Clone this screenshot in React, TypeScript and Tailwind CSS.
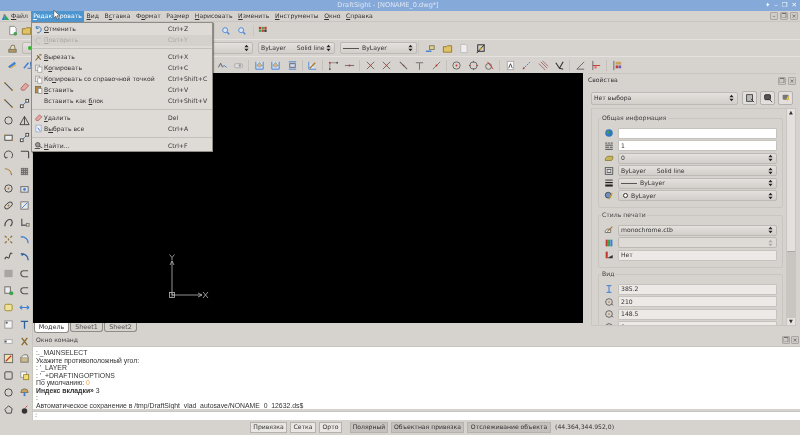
import type { ReactNode } from "react";

const S = "#444";
const RED = "#c0392b";
const BLUE = "#3f7fd0";

// small hand drawn toolbar glyphs, all on a 12x12 box
const glyphs: Record<string, ReactNode> = {
  line: (<><path d="M2 2L10 10" stroke="#555" strokeWidth="1.2" /><circle cx="2" cy="2" r="1" fill="#b5893a" /><circle cx="10" cy="10" r="1" fill="#b5893a" /></>),
  circle: <circle cx="6" cy="6" r="4" fill="none" stroke={S} />,
  rect: (<><rect x="2" y="3.5" width="8" height="5.5" fill="#eee" stroke={S} /><circle cx="2" cy="3.5" r="0.9" fill="#b5893a" /><circle cx="10" cy="9" r="0.9" fill="#b5893a" /></>),
  arc: <path d="M3 10A4.5 4.5 0 1 1 9 10M3 10l2-1M3 10l-1-2" fill="none" stroke={S} />,
  curve: <path d="M2 3C6 3 9 6 9.5 10" fill="none" stroke="#a8762c" strokeWidth="1.3" />,
  target: (<><circle cx="6" cy="6" r="4" fill="none" stroke={S} /><circle cx="6" cy="6" r="1" fill="#a8762c" /></>),
  ellipse: (<><ellipse cx="6" cy="6" rx="5" ry="2.6" transform="rotate(-40 6 6)" fill="none" stroke={S} /><circle cx="6" cy="6" r="1" fill="#a8762c" /></>),
  hook: <path d="M2 10C2 4 6 2 9 3C10.5 5 10 8 8 10" fill="none" stroke={S} strokeWidth="1.2" />,
  dots: <path d="M2 2l2 2M10 2L8 4M2 10l2-2M10 10L8 8M6 5v2" stroke="#8a6b30" strokeWidth="1.4" />,
  wave: <path d="M2 9C4 3 6 11 7 6S9 2 10 3" fill="none" stroke={S} strokeWidth="1.2" />,
  solid: <rect x="1.5" y="2" width="9" height="8" fill="#a8a6a3" />,
  addgreen: (<><rect x="2" y="2" width="6" height="7" fill="#eee" stroke="#666" /><circle cx="9" cy="9" r="2.3" fill="#3fa34d" /></>),
  yellowbox: <rect x="2" y="2.5" width="8" height="7" rx="1.5" fill="#efe29a" stroke="#a08a2a" />,
  note: (<><rect x="2" y="2" width="8" height="8" fill="#f4f4f4" stroke="#999" /><rect x="3" y="3" width="2" height="2" fill="#555" /></>),
  tag: (<><rect x="2" y="4" width="8" height="4" fill="#fff" stroke="#aaa" /><rect x="2" y="5" width="2" height="2" fill="#555" /></>),
  pencil: (<><rect x="1.5" y="1.5" width="9" height="9" fill="#efe3b0" stroke="#666" /><path d="M3 9L9 3" stroke={RED} strokeWidth="1.4" /></>),
  square: <rect x="2" y="2" width="8" height="8" rx="1" fill="none" stroke={S} />,
  star: <path d="M6 2L10 5L9 10H4L2 6Z" fill="none" stroke={S} />,
  eraser: <path d="M2 8L7 2.5L10.5 5L6 10H3Z" fill="#e6a6a0" stroke="#a66" />,
  nodes: (<><path d="M3 9L9 3" stroke={BLUE} /><rect x="1.5" y="7.5" width="3" height="3" fill="#fff" stroke={S} /><rect x="7.5" y="1.5" width="3" height="3" fill="#fff" stroke={S} /></>),
  warn: <path d="M6 1.5L11 10.5H1ZM6 1.5V10.5" fill="none" stroke={S} />,
  corner: <path d="M2 2.5H9.5Q10.5 2.5 10.5 4V10" fill="none" stroke={S} strokeWidth="1.2" />,
  grid: <path d="M2 3H10M2 5H10M2 7H10M2 9H10M3 2V10M5 2V10M7 2V10M9 2V10" stroke="#666" />,
  camera: (<><rect x="2" y="4" width="8" height="6" fill="#dfe4ea" stroke="#666" /><circle cx="6" cy="7" r="1.5" fill={BLUE} /></>),
  diag: (<><rect x="2" y="2" width="8" height="8" fill="#e8e8e8" stroke="#777" /><path d="M3 9L9 3" stroke={BLUE} /></>),
  lshape: (<><path d="M3 2V9H10" fill="none" stroke="#666" strokeWidth="1.5" /><rect x="8" y="7" width="3" height="3" fill="#e3d9a0" stroke="#777" /></>),
  quarter: <path d="M2 3C7 3 10 6 10 10" fill="none" stroke={BLUE} strokeWidth="1.4" />,
  quarter2: <path d="M2 3C7 3 10 6 10 10M3 5L5 3" fill="none" stroke="#2b5f9e" strokeWidth="1.4" />,
  cup: <path d="M10 3H5Q2 3 2 6T5 9.5H10" fill="none" stroke="#555" strokeWidth="1.2" />,
  arrows: <path d="M1 6H11M1 6L3.5 4M1 6L3.5 8M11 6L8.5 4M11 6L8.5 8" fill="none" stroke={BLUE} strokeWidth="1.1" />,
  tee: <path d="M2 2.5H10M6 2.5V10.5" stroke="#2b5f9e" strokeWidth="1.4" />,
  scissors: <path d="M3 2L9 10M9 2L3 10" stroke="#8a6b30" strokeWidth="1.5" />,
  layers: (<><rect x="2" y="5" width="8" height="5" fill="#cdb98a" stroke="#776" /><path d="M2 5L5 2H9L10 5" fill="#eee" stroke="#776" /></>),
  overlap: (<><rect x="2" y="2" width="6" height="6" fill="#fff" stroke="#999" /><rect x="5" y="5" width="5.5" height="5.5" fill="#f2dd75" stroke="#a08a2a" /></>),
  mush: (<><path d="M2 6A4 4 0 0 1 10 6Z" fill="#c8a25c" stroke="#776" /><rect x="5" y="6" width="2" height="4" fill={BLUE} /></>),
  bomb: (<><circle cx="6" cy="7.5" r="3" fill="#333" /><path d="M7 4L9 2" stroke={RED} /></>),
  page: (<><path d="M3 1.5H8L10 3.5V10.5H3Z" fill="#eee" stroke="#bbb" /></>),
  pageNew: (<><path d="M3 1.5H8L10 3.5V10.5H3Z" fill="#fff" stroke="#888" /><circle cx="9" cy="9.5" r="2" fill="#3fa34d" /></>),
  folder: <path d="M1.5 4H5L6 3H10.5V10H1.5Z" fill="#e0c368" stroke="#94782a" />,
  zoom: (<><circle cx="5" cy="5" r="3" fill="#d7e6f7" stroke={BLUE} /><path d="M7.5 7.5L10 10" stroke={BLUE} strokeWidth="1.5" /></>),
  colors: (<><rect x="2" y="2" width="2.5" height="2.5" fill={RED} /><rect x="5" y="2" width="2.5" height="2.5" fill="#3fa34d" /><rect x="8" y="2" width="2.5" height="2.5" fill={RED} /><rect x="2" y="5" width="2.5" height="2.5" fill="#3fa34d" /><rect x="5" y="5" width="2.5" height="2.5" fill={RED} /><rect x="8" y="5" width="2.5" height="2.5" fill="#333" /></>),
  layerIcon: (<><rect x="2" y="7" width="8" height="3" fill="#b79a5c" stroke="#776" /><path d="M3 7L5 2.5H8L9 7Z" fill="#eadcae" stroke="#776" /></>),
  tool3a: (<><path d="M2 8L9 3" stroke={BLUE} strokeWidth="2.5" /><path d="M4 9L10 5" stroke="#d6b43c" strokeWidth="1.2" /></>),
  tool3b: (<><path d="M2 9L7 3" stroke={BLUE} strokeWidth="1.6" /><path d="M6 9H10L9 2" fill="none" stroke="#3f6fb0" /></>),
  dimA: (<><path d="M1.5 8L4 3.5L6 8" fill="none" stroke="#555" /><path d="M6 7Q8 5 10.5 8" fill="none" stroke={BLUE} /></>),
  toggle: (<><rect x="1.5" y="4" width="9" height="4.5" rx="2" fill="#ddd" stroke="#aaa" /><circle cx="7.5" cy="6" r="1.3" fill="#999" /></>),
  frameBlue: (<><path d="M2 2V10H10V2" fill="#d3e0f2" stroke={BLUE} /><path d="M3 6L6 2.5L9 6L6 8Z" fill="#cdb98a" stroke="#776" strokeWidth="0.5" /></>),
  dimH: (<><path d="M2 2H10M2 10H10" stroke={BLUE} /><rect x="3" y="4" width="6" height="4" fill="#c9d9ef" stroke="#667" /></>),
  pen: (<><path d="M2 2V10H10" fill="#dfe8f5" stroke={BLUE} /><path d="M3 9L9 3" stroke="#a8762c" strokeWidth="1.3" /></>),
  ptLine: (<><path d="M2 3H10M2 3V10" stroke="#888" /><circle cx="2" cy="3" r="1" fill={RED} /><circle cx="10" cy="3" r="1" fill="#555" /><circle cx="2" cy="10" r="1" fill="#555" /></>),
  horiz: (<><path d="M1 6H11" stroke="#777" strokeWidth="1.2" /><circle cx="6" cy="6" r="1" fill={RED} /></>),
  cross: (<><path d="M2 2L10 10M10 2L2 10" stroke="#666" /><circle cx="6" cy="6" r="0.8" fill={RED} /></>),
  slash: (<><path d="M2 2L10 10" stroke="#666" strokeWidth="1.1" /><circle cx="6" cy="6" r="0.9" fill={RED} /></>),
  teeGray: <path d="M2 3H10M6 3V10.5" stroke="#777" strokeWidth="1.1" />,
  slashRed: (<><path d="M2 10L10 2" stroke="#777" /><circle cx="6" cy="6" r="1" fill={RED} /></>),
  ring: (<><circle cx="6" cy="6" r="4" fill="none" stroke="#666" /><circle cx="6" cy="6" r="1" fill={RED} /></>),
  ringRed: (<><circle cx="6" cy="6" r="4" fill="none" stroke="#666" /><path d="M6 1V3M6 9V11M1 6H3M9 6H11" stroke={RED} /></>),
  tan: (<><circle cx="5" cy="7" r="3.2" fill="none" stroke="#666" /><path d="M4 2L10 10" stroke={RED} /></>),
  docA: (<><rect x="2.5" y="1.5" width="7" height="9" fill="#fff" stroke="#aaa" /><path d="M4 9L6 4L8 9" fill="none" stroke="#444" /></>),
  dashRB: (<><path d="M2 10L10 2" stroke={BLUE} strokeDasharray="2 1" /><circle cx="3" cy="9" r="1" fill={RED} /></>),
  hatch: <path d="M1 4L8 11M3 2L10 9M5 1L11 7" stroke="#a06a6a" />,
  check: <path d="M2 3L6 9L10 2M6 9L10 10" fill="none" stroke="#333" strokeWidth="1.2" />,
  angle: <path d="M2 10L10 2M2 10H10" fill="none" stroke="#666" />,
  vdim: (<><path d="M2 1V11" stroke="#666" /><path d="M2 6H10" stroke={RED} /><circle cx="5" cy="8" r="1.5" fill="#e77" /></>),
  vlayers: (<><path d="M2 1V11" stroke="#666" /><rect x="4" y="2" width="6" height="3" fill="#c9a25c" /><rect x="4" y="6" width="2.5" height="3" fill={RED} /><rect x="7" y="6" width="3" height="3" fill="#75a" /></>),
  mark: (<><rect x="3" y="2" width="7" height="7" fill="none" stroke="#222" /><path d="M2 11L10 2" stroke="#222" /><circle cx="6" cy="6" r="1" fill="#c9a21c" /></>),
  lockLayer: (<><rect x="5" y="3" width="5" height="4" fill="#e3d487" stroke="#776" /><path d="M1 9H7" stroke={BLUE} strokeWidth="1.5" /></>),
  cursorDoc: (<><rect x="2" y="2" width="7" height="8" fill="#bbb" stroke="#333" /><path d="M7 7L11 11" stroke="#333" /></>),
  cursorOn: (<><rect x="2" y="2" width="7" height="6" rx="1" fill="#555" stroke="#222" /><path d="M7 7L11 11" stroke="#333" /></>),
  bolt: (<><rect x="2" y="2" width="7" height="6" rx="1" fill="#777" /><path d="M8 4L6 8H8L7 11L10 6.5H8.5L9.5 4Z" fill="#eec11c" /></>),
  globe: (<><circle cx="6" cy="6" r="4.5" fill="#2f79c2" /><path d="M3 4L6 3V6L4 8Z" fill="#4c9a4c" /></>),
  hLines: <path d="M1.5 2.5H4M5 2.5H7M8 2.5H10.5M1.5 5H10.5M1.5 7.5H6M7 7.5H10.5M1.5 10H10.5" stroke="#333" />,
  slab: <path d="M1.5 7L4 4H10.5V7L9 9H1.5Z" fill="#c8b45a" stroke="#8c7c36" />,
  ltype: (<><rect x="1.5" y="2" width="9" height="8" fill="#eee" stroke="#444" /><path d="M3 4H9M3 6H5M7 6H9M3 8H9" stroke="#333" /></>),
  lweight: (<><path d="M1.5 2.5H10.5" stroke="#222" /><path d="M1.5 5.5H10.5" stroke="#222" strokeWidth="1.5" /><path d="M1.5 9H10.5" stroke="#222" strokeWidth="2.5" /></>),
  color: (<><circle cx="5" cy="5" r="3.5" fill="#6c8fc9" stroke="#444" /><path d="M6 10L10 2" stroke="#c9a21c" strokeWidth="1.4" /></>),
  plot: (<><path d="M1.5 9H8V5H4L1.5 7Z" fill="#eee" stroke="#666" /><path d="M4 8L10 2" stroke="#a8762c" strokeWidth="1.3" /></>),
  bars: (<><rect x="2" y="2" width="2.5" height="8" fill={RED} /><rect x="4.8" y="2" width="2.5" height="8" fill="#3fa34d" /><rect x="7.6" y="2" width="2.5" height="8" fill={BLUE} /></>),
  plotBars: (<><rect x="2" y="2" width="2.5" height="8" fill={RED} /><path d="M5 10H10.5V6L5 9" fill="#333" /></>),
  ibeam: <path d="M3 2H9M3 10H9M6 2V10" stroke={BLUE} strokeWidth="1.2" />,
  view: (<><circle cx="6" cy="6" r="4" fill="none" stroke="#555" /><circle cx="6" cy="6" r="1" fill="#a8762c" /><path d="M9 8L11 10" stroke="#555" /></>),
  undo: <path d="M3 3C8 1 11 5 9 8S5 10.5 4 10M3 1.5V4.5H6" fill="none" stroke="#2f79c2" strokeWidth="1.3" />,
  redo: <path d="M9 3C4 1 1 5 3 8S7 10.5 8 10" fill="none" stroke="#bbb" strokeWidth="1.3" />,
  cut: <path d="M2 10L7 4M4 3L9 9M7 2.5H10" stroke="#7a6430" strokeWidth="1.4" />,
  copy: (<><rect x="2" y="1.5" width="5.5" height="7" fill="#eee" stroke="#999" /><rect x="5" y="4" width="5.5" height="7" fill="#fff" stroke="#999" /></>),
  paste: (<><rect x="2" y="2" width="7" height="8.5" fill="#b98a3c" stroke="#665" /><rect x="5.5" y="4.5" width="5" height="6.5" fill="#fff" stroke="#888" /></>),
  selall: (<><rect x="2.5" y="1.5" width="7" height="9" fill="#eef" stroke="#9ab" /><path d="M5 5L8 9" stroke={BLUE} strokeWidth="1.3" /></>),
  find: (<><circle cx="5" cy="5" r="3" fill="#999" stroke="#444" /><path d="M7 7L11 9M1 10H8" stroke="#444" strokeWidth="1.2" /></>),
  logo: (<><path d="M1 10.5L5 2V10.5Z" fill="#2a7fd0" /><path d="M5 3L11 10.5H5Z" fill="#2fa84f" /><path d="M3 4H6" stroke="#d43" /></>),
};

function Ico({ k, size = 12, className = "" }: { k: string; size?: number; className?: string }) {
  return (
    <svg viewBox="0 0 12 12" width={size} height={size} className={"shrink-0 " + className}>
      {glyphs[k]}
    </svg>
  );
}

// Qt style label, & marks the underlined letter
function Label({ text }: { text: string }) {
  const i = text.indexOf("&");
  if (i < 0) return <>{text}</>;
  return (
    <>
      {text.slice(0, i)}
      <u>{text[i + 1]}</u>
      {text.slice(i + 2)}
    </>
  );
}

function Updown({ dim }: { dim?: boolean }) {
  return (
    <svg viewBox="0 0 6 9" width="5" height="8" className="shrink-0">
      <path d="M3 0.5L5.5 3.5H0.5ZM3 8.5L5.5 5.5H0.5Z" fill={dim ? "#aaa" : "#222"} />
    </svg>
  );
}

function Combo({ children, className = "", dim }: { children?: ReactNode; className?: string; dim?: boolean }) {
  return (
    <div
      className={
        "flex items-center justify-between rounded-[2px] border border-[#bdb9b4] px-[2px] pr-[3px] " +
        (dim ? "bg-[#dedad6] " : "bg-gradient-to-b from-[#e4e1de] to-[#d2cec9] ") +
        className
      }
    >
      <div className="flex items-center gap-[3px] whitespace-nowrap">{children}</div>
      <Updown dim={dim} />
    </div>
  );
}

function Field({ children, white }: { children?: ReactNode; white?: boolean }) {
  return (
    <div
      className={
        "flex h-[11px] flex-1 items-center rounded-[1px] border border-[#c6c2bd] px-[2px] " +
        (white ? "bg-white" : "bg-[#ece9e6]")
      }
    >
      {children}
    </div>
  );
}

function PropRow({ icon, children }: { icon: string; children: ReactNode }) {
  return (
    <div className="flex h-[12.5px] items-center">
      <div className="flex w-[19px] justify-center">
        <Ico k={icon} size={10} />
      </div>
      <div className="flex flex-1 items-center">{children}</div>
    </div>
  );
}

function Group({ title, className, children }: { title: string; className: string; children: ReactNode }) {
  return (
    <div className={"relative shrink-0 rounded-[2px] border border-[#c9c5c0] pr-[5px] " + className}>
      <span className="absolute left-[2px] top-[-4px] bg-[#d6d2ce] px-[1px] text-[#444]">{title}</span>
      {children}
    </div>
  );
}

function ToolRow({ groups }: { groups: string[][] }) {
  return (
    <div className="flex items-center">
      {groups.map((g, i) => (
        <div key={i} className={"flex items-center gap-[5.5px] " + (i > 0 ? "ml-[4px] border-l border-[#c4c0bb] pl-[4.5px]" : "")}>
          {g.map((k, j) => (
            <Ico key={j} k={k} size={11} />
          ))}
        </div>
      ))}
    </div>
  );
}

const menuBar = ["&Редактировать", "&Вид", "В&ставка", "Ф&ормат", "Ра&змер", "&Нарисовать", "&Изменить", "&Инструменты", "&Окно", "&Справка"];

const popup: ({ icon?: string; text: string; key: string; off?: boolean } | null)[] = [
  { icon: "undo", text: "&Отменить", key: "Ctrl+Z" },
  { icon: "redo", text: "&Повторить", key: "Ctrl+Y", off: true },
  null,
  { icon: "cut", text: "&Вырезать", key: "Ctrl+X" },
  { icon: "copy", text: "К&опировать", key: "Ctrl+C" },
  { icon: "copy", text: "Ко&пировать со справочной точкой", key: "Ctrl+Shift+C" },
  { icon: "paste", text: "&Вставить", key: "Ctrl+V" },
  { text: "Вставить как &блок", key: "Ctrl+Shift+V" },
  null,
  { icon: "eraser", text: "&Удалить", key: "Del" },
  { icon: "selall", text: "В&ыбрать все", key: "Ctrl+A" },
  null,
  { icon: "find", text: "&Найти...", key: "Ctrl+F" },
];

const leftTools = [
  "line", "eraser", "line", "nodes", "circle", "warn", "rect", "nodes", "arc", "corner", "curve", "grid",
  "target", "camera", "ellipse", "diag", "hook", "lshape", "dots", "quarter", "wave", "quarter2", "solid", "cup",
  "addgreen", "cup", "yellowbox", "arrows", "note", "tee", "tag", "scissors", "pencil", "layers", "square", "overlap",
  "circle", "mush", "star", "bomb",
];

const status = [
  { t: "Привязка", w: "w-[37px]" },
  { t: "Сетка", w: "w-[26px]" },
  { t: "Орто", w: "w-[23px]" },
  { t: "Полярный", w: "w-[38px]", on: true, ml: "ml-[5px]" },
  { t: "Объектная привязка", w: "w-[73px]", on: true },
  { t: "Отслеживание объекта", w: "w-[84px]", on: true },
];

function WinBtn({ children }: { children: ReactNode }) {
  return (
    <div className="flex h-[8px] w-[8px] items-center justify-center rounded-[1px] border border-[#aaa6a1] bg-[#cfcbc6] text-[6px] leading-none text-[#555]">
      {children}
    </div>
  );
}

export default function App() {
  return (
    <div className="relative h-[435px] w-[800px] overflow-hidden bg-[#d6d2ce] font-['DejaVu_Sans',sans-serif] text-[6.1px] leading-none text-[#333] blur-[0.25px]">
      {/* title bar */}
      <div className="relative flex h-[11px] items-center justify-center bg-[#85a9d8] text-[#dfe7f3]">
        <span className="ml-[-24px] text-[6.6px]">DraftSight - [NONAME_0.dwg*]</span>
        <div className="absolute right-[3px] top-[2px] flex gap-[4px] text-[6.5px] text-white">
          <span>✦</span>
          <span>–</span>
          <span>❐</span>
          <span>✕</span>
        </div>
      </div>

      {/* menu */}
      <div className="relative flex h-[11px] items-center border-b border-[#c9c5c0] pl-[1px]">
        <Ico k="logo" size={9} />
        <span className="ml-[1px] w-[20px]">
          <Label text="&Файл" />
        </span>
        {menuBar.map((m, i) => (
          <span
            key={m}
            className={
              i === 0
                ? "mr-[-3px] flex h-[11px] w-[53px] items-center justify-center whitespace-nowrap bg-[#4d95cf] text-white"
                : "ml-[5.6px] whitespace-nowrap"
            }
          >
            <Label text={m} />
          </span>
        ))}
        <div className="absolute right-[2px] top-[1px] flex gap-[2px]">
          <WinBtn>–</WinBtn>
          <WinBtn>❐</WinBtn>
          <WinBtn>×</WinBtn>
        </div>
      </div>

      {/* toolbar 1 */}
      <div className="flex h-[18px] items-center border-b border-[#e4e1de] pl-[7px]">
        <Ico k="pageNew" size={11} />
        <Ico k="folder" size={11} className="ml-[3px]" />
        <Ico k="zoom" size={10} className="ml-[189px]" />
        <Ico k="zoom" size={10} className="ml-[6px]" />
        <div className="ml-[6px] h-[11px] border-l border-[#c9c5c0]" />
        <Ico k="colors" size={11} className="ml-[3px]" />
      </div>

      {/* toolbar 2 */}
      <div className="flex h-[17px] items-center border-b border-[#e4e1de] pl-[7px]">
        <Ico k="layerIcon" size={11} />
        <Combo className="ml-[4px] h-[12px] w-[231px]">
          <span className="ml-[3px] h-[4px] w-[4px] rounded-full bg-[#2fb52f]" />
        </Combo>
        <Combo className="ml-[5px] h-[12px] w-[77px]">
          <span>ByLayer</span>
          <span className="ml-[8px]">Solid line</span>
        </Combo>
        <Combo className="ml-[5px] h-[12px] w-[77px]">
          <span className="w-[16px] border-t border-[#555]" />
          <span>ByLayer</span>
        </Combo>
        <div className="ml-[1px] flex h-[14px] items-center gap-[5.5px] border-l border-[#c9c5c0] pl-[6px]">
          <Ico k="lockLayer" size={11} />
          <Ico k="folder" size={11} />
          <Ico k="page" size={11} />
          <Ico k="mark" size={11} />
        </div>
      </div>

      {/* toolbar 3 */}
      <div className="flex h-[16px] items-center pl-[7px]">
        <Ico k="tool3a" size={11} />
        <Ico k="tool3b" size={11} className="ml-[4px]" />
        <div className="ml-[183.5px]">
          <ToolRow
            groups={[
              ["dimA", "toggle"],
              ["frameBlue", "frameBlue", "dimH"],
              ["pen"],
              ["ptLine", "horiz"],
              ["cross", "cross", "slash", "teeGray", "slashRed"],
              ["ring", "ringRed", "tan"],
              ["docA", "dashRB", "hatch", "check"],
              ["angle", "vdim"],
              ["vlayers"],
            ]}
          />
        </div>
      </div>

      {/* main area */}
      <div className="flex h-[347px]">
        <div className="grid h-full w-[33px] grid-cols-2 content-start justify-items-center border-r border-[#c9c5c0] pt-[5px]">
          {leftTools.map((k, i) => (
            <div key={i} className="flex h-[17px] items-center">
              <Ico k={k} size={11} />
            </div>
          ))}
        </div>

        <div className="flex min-w-0 flex-1 flex-col">
          <div className="flex h-[260px]">
            {/* drawing area */}
            <div className="flex w-[550px] flex-col">
              <div className="relative h-[250px] bg-black">
                <svg viewBox="0 0 50 50" width="50" height="50" className="absolute left-[130px] top-[181px]">
                  <path d="M9 41V7M9 7L7 11M9 7L11 11M9 41H39M39 41L35 39M39 41L35 43" fill="none" stroke="#b8b8b8" strokeWidth="0.8" />
                  <rect x="6.5" y="38.5" width="5" height="5" fill="none" stroke="#b8b8b8" strokeWidth="0.8" />
                  <path d="M9 41H11.5M9 38.5V43.5" stroke="#b8b8b8" strokeWidth="0.6" />
                  <path d="M6.5 0.5L9 3.5L11.5 0.5M9 3.5V6.5M40 38L45 44M45 38L40 44" fill="none" stroke="#b8b8b8" strokeWidth="0.8" />
                </svg>
              </div>
              <div className="flex h-[10px] items-start pl-[1px] text-[6.4px]">
                <div className="flex h-[10px] w-[35px] items-center justify-center rounded-b-[3px] border border-t-0 border-[#8f8b86] bg-white text-[#333]">
                  Модель
                </div>
                <div className="ml-[1px] flex h-[9px] w-[33px] items-center justify-center rounded-b-[3px] border border-t-0 border-[#8f8b86] text-[#555]">
                  Sheet1
                </div>
                <div className="ml-[1px] flex h-[9px] w-[33px] items-center justify-center rounded-b-[3px] border border-t-0 border-[#8f8b86] text-[#555]">
                  Sheet2
                </div>
              </div>
            </div>

            {/* properties */}
            <div className="ml-[2px] flex min-w-0 flex-1 flex-col pl-[3px] pr-[4px]">
              <div className="flex h-[14px] items-center justify-between border-t border-[#c9c5c0]">
                <span>Свойства</span>
                <div className="flex gap-[2px]">
                  <WinBtn>❐</WinBtn>
                  <WinBtn>×</WinBtn>
                </div>
              </div>
              <div className="mt-[4px] flex h-[14px] items-center pl-[3px]">
                <Combo className="h-[13px] w-[147px]">
                  <span>Нет выбора</span>
                </Combo>
                {["cursorDoc", "cursorOn", "bolt"].map((k, i) => (
                  <div key={k} className={"flex h-[14px] w-[15px] items-center justify-center rounded-[2px] border border-[#b5b1ac] bg-[#e2dfdc] " + (i === 0 ? "ml-[4px]" : "ml-[3px]")}>
                    <Ico k={k} size={10} />
                  </div>
                ))}
              </div>
              <div className="relative ml-[3px] mt-[3px] flex h-[218px] overflow-hidden border border-[#c9c5c0] pl-[6px]">
                <div className="flex min-w-0 flex-1 flex-col pr-[3px] pt-[9px]">
                  <Group title="Общая информация" className="h-[90px] pt-[8px]">
                    <PropRow icon="globe"><Field white /></PropRow>
                    <PropRow icon="hLines"><Field white>1</Field></PropRow>
                    <PropRow icon="slab"><Combo className="h-[11px] flex-1">0</Combo></PropRow>
                    <PropRow icon="ltype">
                      <Combo className="h-[11px] flex-1"><span>ByLayer</span><span className="ml-[8px]">Solid line</span></Combo>
                    </PropRow>
                    <PropRow icon="lweight">
                      <Combo className="h-[11px] flex-1"><span className="w-[16px] border-t border-[#555]" /><span>ByLayer</span></Combo>
                    </PropRow>
                    <PropRow icon="color">
                      <Combo className="h-[11px] flex-1"><span className="ml-[2px] h-[5px] w-[5px] rounded-full border border-[#333] bg-white" /><span>ByLayer</span></Combo>
                    </PropRow>
                  </Group>
                  <Group title="Стиль печати" className="mt-[7px] h-[53px] pt-[8px]">
                    <PropRow icon="plot"><Combo className="h-[11px] flex-1">monochrome.ctb</Combo></PropRow>
                    <PropRow icon="bars"><Combo className="h-[11px] flex-1" dim /></PropRow>
                    <PropRow icon="plotBars"><Field>Нет</Field></PropRow>
                  </Group>
                  <Group title="Вид" className="mt-[6px] h-[70px] pt-[8px]">
                    <PropRow icon="ibeam"><Field>385.2</Field></PropRow>
                    <PropRow icon="view"><Field>210</Field></PropRow>
                    <PropRow icon="view"><Field>148.5</Field></PropRow>
                    <PropRow icon="view"><Field>0</Field></PropRow>
                  </Group>
                </div>
                {/* scrollbar */}
                <div className="flex w-[9px] shrink-0 flex-col border-l border-[#c9c5c0] bg-[#c9c5c0]">
                  <div className="flex h-[7px] items-center justify-center bg-[#e6e3e0] text-[5px]">▲</div>
                  <div className="h-[136px] border-b border-[#aaa] bg-[#e3e0dd]" />
                  <div className="flex-1" />
                  <div className="flex h-[7px] items-center justify-center bg-[#e6e3e0] text-[5px]">▼</div>
                </div>
              </div>
            </div>
          </div>

          {/* command window */}
          <div className="flex h-[14px] items-center justify-between border-b border-[#c9c5c0] pl-[3px] pr-[1px] pt-[1px]">
            <span className="text-[#444]">Окно команд</span>
            <div className="flex gap-[1px]">
              <WinBtn>❐</WinBtn>
              <WinBtn>×</WinBtn>
            </div>
          </div>
          <div className="flex h-[63px] flex-col justify-end overflow-hidden bg-white pl-[3px] font-['Liberation_Sans',sans-serif] text-[6.85px] leading-[7.5px] text-[#333]">
            <div>:._MAINSELECT</div>
            <div>Укажите противоположный угол:</div>
            <div>: '_LAYER</div>
            <div>: '_+DRAFTINGOPTIONS</div>
            <div>
              По умолчанию: <span className="text-[#e9a04a]">0</span>
            </div>
            <div className="font-bold">
              Индекс вкладки» <span className="font-normal">3</span>
            </div>
            <div>:</div>
            <div>Автоматическое сохранение в /tmp/DraftSight_vlad_autosave/NONAME_0_12632.ds$</div>
          </div>
          <div className="mt-[2px] h-[9px] border-t border-[#c9c5c0] bg-white pl-[2px]">:</div>
        </div>
      </div>

      {/* status bar */}
      <div className="flex h-[15px] items-center pl-[250px]">
        {status.map((s) => (
          <div
            key={s.t}
            className={
              "mr-[3px] flex h-[11px] items-center justify-center whitespace-nowrap border border-[#b5b1ac] " +
              s.w + " " + (s.ml ?? "") + " " +
              (s.on ? "bg-[#c5c1bc]" : "bg-[#e9e6e3]")
            }
          >
            {s.t}
          </div>
        ))}
        <span className="ml-[1px] whitespace-nowrap">(44.364,344.952,0)</span>
      </div>

      {/* open edit menu */}
      <div className="absolute left-[31px] top-[22px] flex h-[130px] w-[182px] flex-col border border-[#8f8b86] bg-[#dedad6] pt-[1px] shadow-[1px_1px_1px_rgba(0,0,0,0.35)]">
        {popup.map((it, i) =>
          it === null ? (
            <div key={i} className="my-[2.5px] border-t border-[#c4c0bb]" />
          ) : (
            <div key={i} className={"flex h-[11.4px] items-center " + (it.off ? "bg-[#d4d0cb] text-[#aaa6a1]" : "")}>
              <div className="flex w-[12px] justify-center">
                {it.icon && <Ico k={it.icon} size={9} />}
              </div>
              <span className="w-[124px]">
                <Label text={it.text} />
              </span>
              <span>{it.key}</span>
            </div>
          )
        )}
      </div>

      {/* mouse pointer */}
      <svg viewBox="0 0 10 14" width="8" height="12" className="absolute left-[53px] top-[9px]">
        <path d="M1 1V11L3.5 8.5L5.5 13L7 12.3L5 8H8.5Z" fill="#fff" stroke="#333" strokeWidth="0.7" />
      </svg>
    </div>
  );
}
